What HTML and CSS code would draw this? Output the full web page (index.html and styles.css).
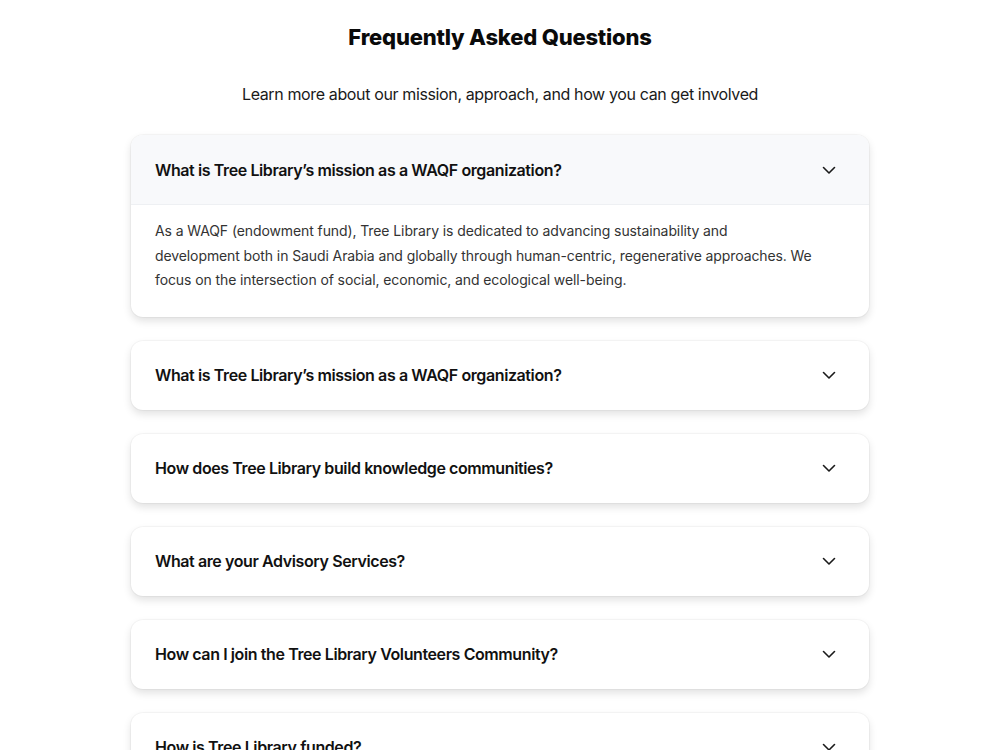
FILE: index.html
```html
<!DOCTYPE html>
<html lang="en">
<head>
    <meta charset="UTF-8">
    <meta name="viewport" content="width=device-width, initial-scale=1.0">
    <title>FAQ - Tree Library</title>
    <link rel="stylesheet" href="styles.css">
</head>
<body>
    <section class="faq">
        <h1 class="faq-title">Frequently Asked Questions</h1>
        <p class="faq-sub">Learn more about our mission, approach, and how you can get involved</p>

        <div class="faq-list">
            <div class="faq-item open">
                <div class="faq-q">
                    <span>What is Tree Library’s mission as a WAQF organization?</span>
                    <svg class="chev" width="20" height="20" viewBox="0 0 20 20"><path d="M4.5 7.5 L10 13 L15.5 7.5" /></svg>
                </div>
                <div class="faq-a">
                    As a WAQF (endowment fund), Tree Library is dedicated to advancing sustainability and development both in Saudi Arabia and globally through human-centric, regenerative approaches. We focus on the intersection of social, economic, and ecological well-being.
                </div>
            </div>

            <div class="faq-item">
                <div class="faq-q">
                    <span>What is Tree Library’s mission as a WAQF organization?</span>
                    <svg class="chev" width="20" height="20" viewBox="0 0 20 20"><path d="M4.5 7.5 L10 13 L15.5 7.5" /></svg>
                </div>
            </div>

            <div class="faq-item">
                <div class="faq-q">
                    <span>How does Tree Library build knowledge communities?</span>
                    <svg class="chev" width="20" height="20" viewBox="0 0 20 20"><path d="M4.5 7.5 L10 13 L15.5 7.5" /></svg>
                </div>
            </div>

            <div class="faq-item">
                <div class="faq-q">
                    <span>What are your Advisory Services?</span>
                    <svg class="chev" width="20" height="20" viewBox="0 0 20 20"><path d="M4.5 7.5 L10 13 L15.5 7.5" /></svg>
                </div>
            </div>

            <div class="faq-item">
                <div class="faq-q">
                    <span>How can I join the Tree Library Volunteers Community?</span>
                    <svg class="chev" width="20" height="20" viewBox="0 0 20 20"><path d="M4.5 7.5 L10 13 L15.5 7.5" /></svg>
                </div>
            </div>

            <div class="faq-item">
                <div class="faq-q">
                    <span>How is Tree Library funded?</span>
                    <svg class="chev" width="20" height="20" viewBox="0 0 20 20"><path d="M4.5 7.5 L10 13 L15.5 7.5" /></svg>
                </div>
            </div>
        </div>
    </section>
</body>
</html>
```

FILE: styles.css
```css
body {
    margin: 0;
    font-family: Inter, "Noto Sans", sans-serif;
    background: #fff;
    color: #111;
}
.faq {
    width: 738px;
    margin: 0 auto;
    padding-top: 22px;
}
.faq-title {
    margin: 0;
    text-align: center;
    font-size: 22px;
    font-weight: 800;
    line-height: 30px;
    letter-spacing: -0.2px;
    color: #0a0a0a;
}
.faq-sub {
    margin: 30px 0 0;
    text-align: center;
    font-size: 16px;
    line-height: 24px;
    letter-spacing: -0.37px;
    color: #1a1a1a;
}
.faq-list {
    display: flex;
    flex-direction: column;
    gap: 24px;
    margin-top: 29px;
}
.faq-item {
    background: #fff;
    border-radius: 12px;
    box-shadow: 0 0 0 1px rgba(0, 0, 0, 0.03), 0 4px 8px rgba(0, 0, 0, 0.12);
    overflow: hidden;
}
.faq-q {
    display: flex;
    align-items: center;
    justify-content: space-between;
    height: 69px;
    padding: 0 30px 0 24px;
    font-size: 16px;
    font-weight: 600;
    letter-spacing: -0.4px;
    color: #111;
}
.open .faq-q {
    background: #f8f9fb;
    border-bottom: 1px solid #eef0f3;
}
.chev path {
    fill: none;
    stroke: #1a1a1a;
    stroke-width: 1.6;
    stroke-linecap: round;
    stroke-linejoin: round;
}
.faq-a {
    padding: 14px 54px 24px 24px;
    font-size: 14px;
    line-height: 24.5px;
    letter-spacing: -0.1px;
    color: #333;
}
```
